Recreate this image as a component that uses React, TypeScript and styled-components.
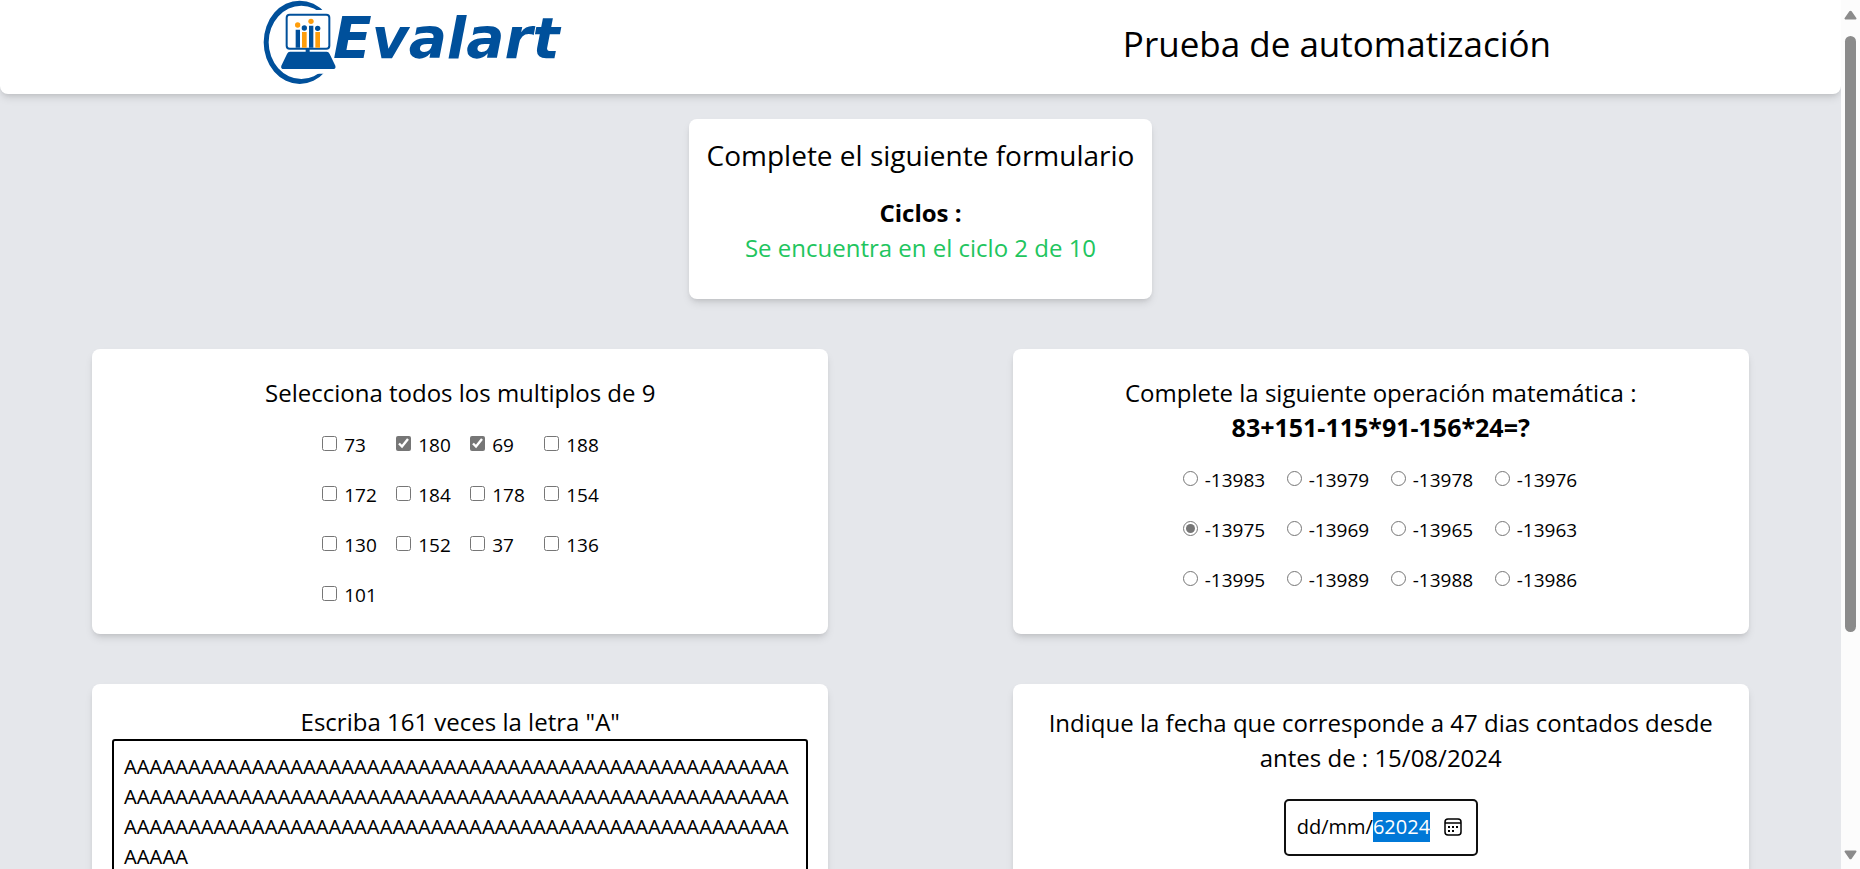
import React, { useEffect, useRef } from "react";
import styled, { createGlobalStyle } from "styled-components";

const GlobalStyle = createGlobalStyle`
  *, *::before, *::after { box-sizing: border-box; }
  body {
    margin: 0;
    background: #e5e7eb;
    color: #000;
    font-family: "Segoe UI", "Open Sans", sans-serif;
    font-size: 19px;
    line-height: 30px;
  }
  h1, h2, p { margin: 0; font-weight: 400; }
`;

const shadow = "0 5px 8px -1px rgba(0, 0, 0, 0.1), 0 3px 5px -2px rgba(0, 0, 0, 0.1)";

const Shell = styled.div`
  display: grid;
  grid-template-columns: minmax(0, 1fr) 19px;
  height: 100vh;
`;

const Page = styled.div`
  overflow-y: auto;
  scrollbar-width: none;
`;

const Header = styled.header`
  display: flex;
  justify-content: space-between;
  padding: 0 290px 9px 263px;
  background: #fff;
  border-radius: 0 0 8px 8px;
  box-shadow: ${shadow};
`;

const Logo = styled.svg`
  width: 300px;
  height: 85px;
  flex: none;
`;

const LogoText = styled.text`
  font-family: "DejaVu Sans", sans-serif;
  font-size: 170px;
  font-weight: 700;
  font-style: oblique;
  fill: #00509b;
`;

const PageTitle = styled.h1`
  padding-top: 21px;
  font-size: 35px;
  line-height: 45px;
`;

const Card = styled.section`
  background: #fff;
  border-radius: 8px;
  box-shadow: ${shadow};
  text-align: center;
`;

const IntroCard = styled(Card)`
  width: fit-content;
  margin: 25px auto;
  padding: 16px 18px 34px;
`;

const IntroTitle = styled.h2`
  margin-bottom: 20px;
  font-size: 28px;
  line-height: 40px;
`;

const Line = styled.p<{ $bold?: boolean; $color?: string }>`
  font-size: 24px;
  line-height: 35px;
  font-weight: ${(p) => (p.$bold ? 700 : 400)};
  color: ${(p) => p.$color ?? "inherit"};
`;

const Operation = styled(Line)`
  font-size: 25px;
`;

const Questions = styled.form`
  display: grid;
  grid-template-columns: 1fr 1fr;
`;

const Question = styled(Card)<{ $top: number }>`
  width: 80%;
  margin: 25px auto;
  padding: ${(p) => p.$top}px 20px 14px;
`;

const Options = styled.div<{ $column: number }>`
  display: grid;
  grid-template-columns: repeat(4, ${(p) => p.$column}px);
  justify-content: center;
  margin-top: 10px;
`;

const Option = styled.label`
  display: flex;
  align-items: center;
  gap: 7px;
  padding: 10px;
`;

const Tick = styled.input`
  flex: none;
  width: 15px;
  height: 15px;
  margin: 0 0 3px;
  accent-color: #767676;
`;

const Answer = styled.textarea`
  display: block;
  width: 100%;
  height: 260px;
  padding: 11px 10px;
  border: 2px solid #000;
  border-radius: 3px;
  background: #fff;
  color: #000;
  font-family: "Noto Sans", sans-serif;
  font-size: 20px;
  line-height: 30px;
  word-break: break-all;
  resize: none;
  outline: none;
`;

const DateBox = styled.div`
  display: inline-flex;
  align-items: center;
  justify-content: space-between;
  width: 194px;
  margin-top: 24px;
  padding: 11px 14px 12px 11px;
  border: 2px solid #101010;
  border-radius: 5px;
`;

const DateInput = styled.input`
  width: 140px;
  height: 30px;
  padding: 0;
  border: 0;
  outline: 0;
  font-family: inherit;
  font-size: 20px;
  line-height: 30px;
  &::selection { background: #0078d7; color: #fff; }
`;

const PlainButton = styled.button`
  display: flex;
  padding: 0;
  border: 0;
  background: none;
`;

const Submit = styled.button`
  display: block;
  margin: 25px auto 50px;
  padding: 10px 20px;
  border: 0;
  border-radius: 8px;
  background: #22c55e;
  color: #fff;
  font: inherit;
`;

const ScrollBar = styled.div`
  display: flex;
  flex-direction: column;
  align-items: center;
  padding: 10px 0 9px;
  background: #fcfcfc;
`;

const Track = styled.div`
  flex: 1;
  padding: 16px 0 9px;
`;

const Thumb = styled.div`
  width: 11px;
  height: 74%;
  border-radius: 6px;
  background: #8b8b8b;
`;

const multiples = [73, 180, 69, 188, 172, 184, 178, 154, 130, 152, 37, 136, 101];
const chosen = [180, 69];
const results = [
  -13983, -13979, -13978, -13976, -13975, -13969,
  -13965, -13963, -13995, -13989, -13988, -13986,
];

function EvalartLogo() {
  return (
    <Logo viewBox="40 0 900 255" role="img" aria-label="Evalart">
      <defs>
        <clipPath id="ring">
          <path d="M0 0H260V30H150V221H260V260H0Z" />
        </clipPath>
      </defs>
      <g fill="#00509b">
        <path
          clipPath="url(#ring)"
          fillRule="evenodd"
          d="M150 2A108 125 0 1 0 150 252A108 125 0 1 0 150 2ZM155 17A98 110 0 1 1 155 237A98 110 0 1 1 155 17Z"
        />
        <rect x="111" y="44" width="128" height="102" rx="9" fill="#fff" stroke="#00509b" strokeWidth="6" />
        <path d="M138 89h13v54h-13zM178 77h13v66h-13zM168 147h12v12h-12z" />
        <circle cx="164" cy="84" r="8" />
        <circle cx="204" cy="85" r="8" />
        <path d="M121 155H231Q237 155 240 162L257 197Q260 207 249 207H103Q92 207 95 197L112 162Q115 155 121 155Z" />
      </g>
      <g fill="#ff9d0a">
        <path d="M157 96h14v47h-14zM197 96h14v47h-14z" />
        <circle cx="144" cy="75" r="8" />
        <circle cx="184" cy="64" r="8" />
      </g>
      <LogoText x="250" y="175">Evalart</LogoText>
    </Logo>
  );
}

function CalendarIcon() {
  return (
    <svg width="18" height="18" viewBox="0 0 18 18" fill="none" stroke="#000" strokeWidth="1.5" aria-hidden="true">
      <rect x="1" y="1" width="16" height="16" rx="3" />
      <path d="M1 5h16" />
      <path d="M8 9h2M12 9h2M4 9h2M4 13h2M8 13h2" strokeWidth="2" />
    </svg>
  );
}

function Arrow({ down }: { down?: boolean }) {
  return (
    <svg width="13" height="10" viewBox="0 0 13 10" aria-hidden="true">
      <path
        d={down ? "M1.5 1.5H11.5L7 8Q6.5 8.5 6 8Z" : "M1.5 8.5H11.5L7 2Q6.5 1.5 6 2Z"}
        fill="#8b8b8b"
        stroke="#8b8b8b"
        strokeWidth="2"
        strokeLinejoin="round"
      />
    </svg>
  );
}

export default function App() {
  const page = useRef<HTMLDivElement>(null);
  const date = useRef<HTMLInputElement>(null);

  useEffect(() => {
    date.current?.focus({ preventScroll: true });
    date.current?.setSelectionRange(6, 11);
  }, []);

  const scroll = (dy: number) => page.current?.scrollBy({ top: dy });

  return (
    <>
      <GlobalStyle />
      <Shell>
        <Page ref={page}>
          <Header>
            <EvalartLogo />
            <PageTitle>Prueba de automatización</PageTitle>
          </Header>
          <main>
            <IntroCard>
              <IntroTitle>Complete el siguiente formulario</IntroTitle>
              <Line $bold>Ciclos :</Line>
              <Line $color="#22c55e">Se encuentra en el ciclo 2 de 10</Line>
            </IntroCard>
            <Questions onSubmit={(e) => e.preventDefault()}>
              <Question $top={26}>
                <Line>Selecciona todos los multiplos de 9</Line>
                <Options $column={74} role="group" aria-label="Multiplos de 9">
                  {multiples.map((n) => (
                    <Option key={n}>
                      <Tick type="checkbox" defaultChecked={chosen.includes(n)} />
                      {n}
                    </Option>
                  ))}
                </Options>
              </Question>
              <Question $top={26}>
                <Line>Complete la siguiente operación matemática :</Line>
                <Operation $bold>83+151-115*91-156*24=?</Operation>
                <Options $column={104} role="radiogroup" aria-label="Resultado">
                  {results.map((n) => (
                    <Option key={n}>
                      <Tick type="radio" name="resultado" defaultChecked={n === -13975} />
                      {n}
                    </Option>
                  ))}
                </Options>
              </Question>
              <Question $top={20}>
                <Line as="label" htmlFor="letras">Escriba 161 veces la letra "A"</Line>
                <Answer id="letras" spellCheck={false} defaultValue={"A".repeat(161)} />
              </Question>
              <Question $top={21}>
                <Line as="label" htmlFor="fecha">
                  Indique la fecha que corresponde a 47 dias contados desde antes de : 15/08/2024
                </Line>
                <div>
                  <DateBox>
                    <DateInput id="fecha" ref={date} type="text" defaultValue="dd/mm/62024" />
                    <PlainButton type="button" aria-label="Abrir calendario">
                      <CalendarIcon />
                    </PlainButton>
                  </DateBox>
                </div>
              </Question>
            </Questions>
            <Submit type="submit">Enviar</Submit>
          </main>
        </Page>
        <ScrollBar>
          <PlainButton type="button" aria-label="Subir" onClick={() => scroll(-50)}>
            <Arrow />
          </PlainButton>
          <Track>
            <Thumb />
          </Track>
          <PlainButton type="button" aria-label="Bajar" onClick={() => scroll(50)}>
            <Arrow down />
          </PlainButton>
        </ScrollBar>
      </Shell>
    </>
  );
}
